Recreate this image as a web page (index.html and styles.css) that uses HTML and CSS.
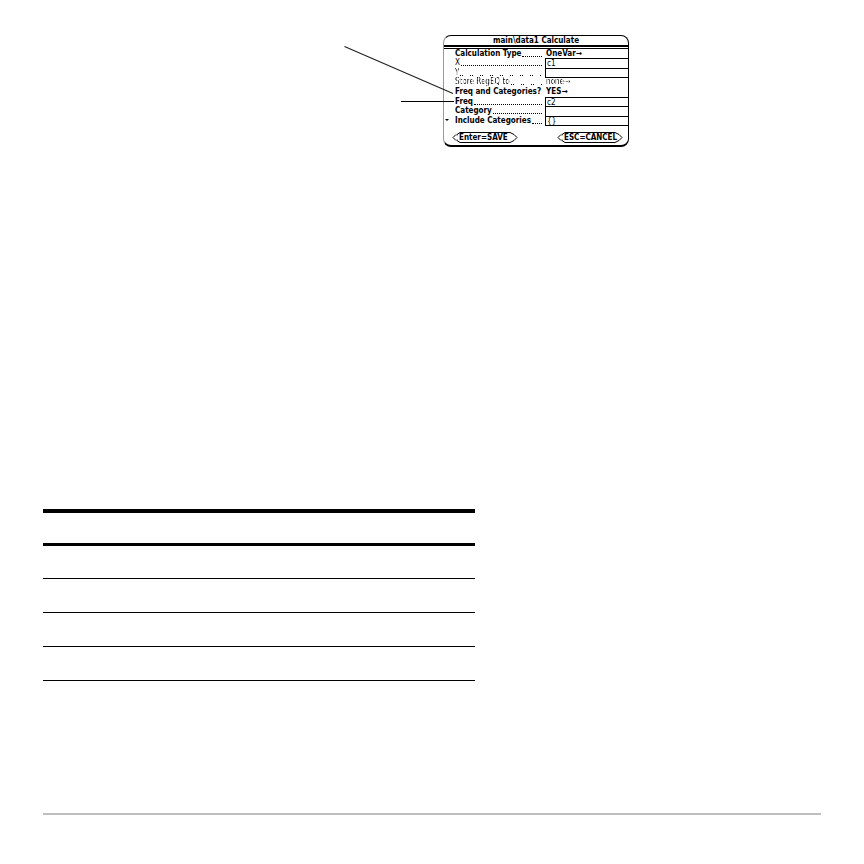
FILE: index.html
```html
<!DOCTYPE html>
<html lang="en">
<head>
<meta charset="utf-8">
<title>Calculate</title>
<link rel="stylesheet" href="styles.css">
</head>
<body>
<main class="page">
  <section class="figure">
    <svg class="callouts" viewBox="0 0 110 111" aria-hidden="true">
      <path d="M0.5 11.5 L109 58.5" stroke="#222" stroke-width="1.2"/>
      <path d="M57 66.500H110" stroke="#000"/>
    </svg>
    <form class="dialog">
      <h1 class="title">main\data1 Calculate</h1>
      <div class="rows">
        <div class="row"><label for="type">Calculation Type</label><i class="dots"></i><select id="type" class="value"><option>OneVar→</option></select></div>
        <div class="row"><label class="light" for="x">X</label><i class="dots"></i><input id="x" class="value box" value="c1"></div>
        <div class="row"><label class="dim" for="y">Y</label><i class="dots sparse"></i><input id="y" class="value box"></div>
        <div class="row"><label class="dim" for="store">Store RegEQ to</label><i class="dots sparse"></i><select id="store" class="value dim"><option>none→</option></select></div>
        <div class="row"><label for="use">Freq and Categories?</label><i class="gap"></i><select id="use" class="value"><option>YES→</option></select></div>
        <div class="row"><label for="freq">Freq</label><i class="dots"></i><input id="freq" class="value box" value="c2"></div>
        <div class="row"><label for="cat">Category</label><i class="dots"></i><input id="cat" class="value box"></div>
        <div class="row more"><label for="inc">Include Categories</label><i class="dots"></i><input id="inc" class="value box" value="{}"></div>
      </div>
      <div class="actions">
        <button type="button" class="key"><svg viewBox="0 0 66 11" aria-hidden="true"><path d="M4 2.500 L1 5.500 L4 8.500 M5 3.500 V2.500 L8 .5 H58 L62 2.500 L65 5.500 L62 8.500 L58 10.500 H8 L5 8.500 V7.500"/></svg><span>Enter=SAVE</span></button>
        <button type="button" class="key"><svg viewBox="0 0 66 11" aria-hidden="true"><path d="M4 2.500 L1 5.500 L4 8.500 M5 3.500 V2.500 L8 .5 H58 L62 2.500 L65 5.500 L62 8.500 L58 10.500 H8 L5 8.500 V7.500"/></svg><span>ESC=CANCEL</span></button>
      </div>
    </form>
  </section>
  <table class="sheet">
    <thead><tr><th></th></tr></thead>
    <tbody>
      <tr><td></td></tr>
      <tr><td></td></tr>
      <tr><td></td></tr>
      <tr><td></td></tr>
    </tbody>
  </table>
  <hr class="foot">
</main>
</body>
</html>
```
FILE: styles.css
```css
* { box-sizing: border-box; }
body { margin: 0; background: #fff; color: #000; }
.page { padding: 35px 43px 0; }

.figure {
  display: flex;
  align-items: flex-start;
  margin: 0 0 362px 301px;
}
.callouts { position: relative; z-index: 1; flex: none; width: 110px; fill: none; }

.dialog {
  flex: none;
  width: 186px;
  margin-left: -11px;
  border: 1px solid #000;
  border-left-color: #999;
  border-bottom-width: 2px;
  border-radius: 8px;
  font: bold 8px/9px "DejaVu Sans Condensed", "DejaVu Sans", sans-serif;
}
.title {
  position: relative;
  height: 13px;
  margin: 0;
  border-bottom: 1px solid #000;
  font: inherit;
  line-height: 10px;
  text-align: center;
}
.title::after {
  content: "";
  position: absolute;
  inset: auto 0 1px;
  height: 2px;
  background: #000;
}

.rows { display: grid; grid-template-rows: 9px 10px 9px 10px 10px 9px 10px 9px; }
.row { position: relative; display: flex; min-height: 0; padding-left: 11px; white-space: nowrap; }
.dots, .gap { flex: 1; margin: 0 3px 0 1px; }
.dots { height: 8px; border-bottom: 1px dotted #000; }
.sparse {
  border: 0;
  background: repeating-linear-gradient(90deg, #000 0 1px, #fff 1px 2px, #000 2px 3px, #fff 3px 10px) 0 100% / 100% 1px no-repeat;
}
.value {
  flex: none;
  width: 84px;
  height: 9px;
  min-height: 0;
  margin: 0;
  padding: 0 1px;
  border: 0;
  border-radius: 0;
  appearance: none;
  background: none;
  color: #000;
  font: inherit;
  outline: 0;
}
.box {
  height: auto;
  margin-bottom: -1px;
  border: 1px solid #000;
  border-right: 0;
  font-weight: normal;
}
.light { font-weight: normal; }
.dim {
  font-weight: normal;
  mask-image: repeating-linear-gradient(90deg, #000 0 2px, #0004 2px 3px);
}
.more::before {
  content: "";
  position: absolute;
  left: 1px;
  top: 3px;
  border: 2px solid transparent;
  border-top-color: #000;
}

.actions { display: flex; justify-content: space-between; padding: 7px 5px 2px 8px; }
.key {
  position: relative;
  width: 66px;
  height: 11px;
  padding: 0 0 0 7px;
  border: 0;
  background: none;
  color: #000;
  font: inherit;
  line-height: 11px;
  text-align: left;
  white-space: nowrap;
}
.key svg { position: absolute; inset: 0; fill: none; stroke: #000; }
.key span { position: relative; }

.sheet { width: 56%; max-width: 432px; border-collapse: separate; border-spacing: 0; border-top: 4px solid #000; }
.sheet th { height: 33px; padding: 0; border-bottom: 3px solid #000; }
.sheet td { height: 34px; padding: 0; border-bottom: 1px solid #000; }
.sheet tr:first-child td { height: 33px; }
.foot { height: 2px; margin: 132px 0 0; border: 0; background: #bfbfbf; }
```
